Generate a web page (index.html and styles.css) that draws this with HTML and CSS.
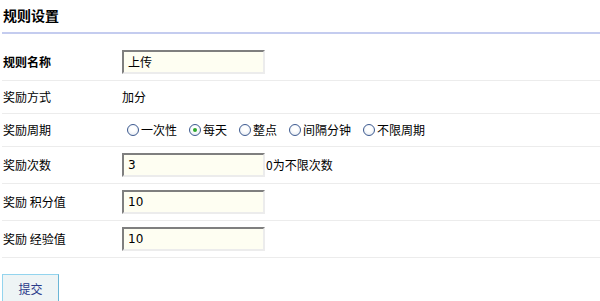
FILE: index.html
```html
<!DOCTYPE html>
<html lang="zh">
<head>
<meta charset="utf-8">
<link rel="stylesheet" href="styles.css">
</head>
<body>
<div class="page">
  <h1 class="title">规则设置</h1>
  <div class="rows">
    <div class="row">
      <div class="label bold">规则名称</div>
      <div class="field"><span class="input">上传</span></div>
    </div>
    <div class="row short">
      <div class="label">奖励方式</div>
      <div class="field">加分</div>
    </div>
    <div class="row short">
      <div class="label">奖励周期</div>
      <div class="field radios">
        <span class="opt"><span class="radio"></span>一次性</span>
        <span class="opt"><span class="radio checked"></span>每天</span>
        <span class="opt"><span class="radio"></span>整点</span>
        <span class="opt"><span class="radio"></span>间隔分钟</span>
        <span class="opt"><span class="radio"></span>不限周期</span>
      </div>
    </div>
    <div class="row">
      <div class="label">奖励次数</div>
      <div class="field"><span class="input num">3</span><span class="hint">0为不限次数</span></div>
    </div>
    <div class="row">
      <div class="label">奖励 积分值</div>
      <div class="field"><span class="input num">10</span></div>
    </div>
    <div class="row">
      <div class="label">奖励 经验值</div>
      <div class="field"><span class="input num">10</span></div>
    </div>
  </div>
  <button class="submit">提交</button>
</div>
</body>
</html>
```
FILE: styles.css
```css
html, body {
  margin: 0;
  padding: 0;
  background: #fff;
}
body {
  font-family: "Noto Sans CJK SC", "Liberation Sans", sans-serif;
  font-size: 12px;
  color: #000;
}
.page {
  padding: 0 0 0 2px;
}
.title {
  margin: 0;
  font-size: 14px;
  font-weight: bold;
  line-height: 20px;
  padding: 5px 0 7px 1px;
  border-bottom: 2px solid #c4ccef;
}
.rows {
  margin-top: 10px;
}
.row {
  display: flex;
  align-items: center;
  padding: 6px 0;
  border-bottom: 1px solid #ececec;
}
.row.short {
  padding: 6px 0;
  min-height: 20px;
}
.label {
  width: 119px;
  padding-left: 1px;
  line-height: 20px;
}
.label.bold {
  font-weight: bold;
}
.field {
  display: flex;
  align-items: center;
  line-height: 20px;
}
.input {
  box-sizing: border-box;
  display: flex;
  align-items: center;
  width: 143px;
  height: 24px;
  padding: 0 4px;
  background: #fefef2;
  border-top: 2px solid #7f7f7f;
  border-left: 2px solid #7f7f7f;
  border-right: 2px solid #ececec;
  border-bottom: 2px solid #ececec;
  font-size: 12px;
}
.input.num {
  font-family: "DejaVu Sans", sans-serif;
  font-size: 12px;
}
.hint {
  margin-left: 1px;
}
.radios {
  gap: 12px;
  padding-left: 5px;
}
.opt {
  display: flex;
  align-items: center;
  gap: 2px;
}
.radio {
  box-sizing: border-box;
  width: 12px;
  height: 12px;
  border-radius: 50%;
  border: 1px solid #3d5a90;
  background: radial-gradient(circle at 50% 40%, #ffffff 30%, #dfe6ee 100%);
  position: relative;
}
.radio.checked::after {
  content: "";
  position: absolute;
  left: 3px;
  top: 3px;
  width: 4px;
  height: 4px;
  border-radius: 50%;
  background: #2fa82f;
}
.submit {
  margin-top: 16px;
  width: 57px;
  height: 28px;
  padding: 0;
  background: #eef4f5;
  border: 1px solid #93d4ee;
  border-right-color: #6bb6d6;
  border-bottom-color: #6bb6d6;
  color: #2a3a8a;
  font-family: "Noto Sans CJK SC", sans-serif;
  font-size: 12px;
}
```
